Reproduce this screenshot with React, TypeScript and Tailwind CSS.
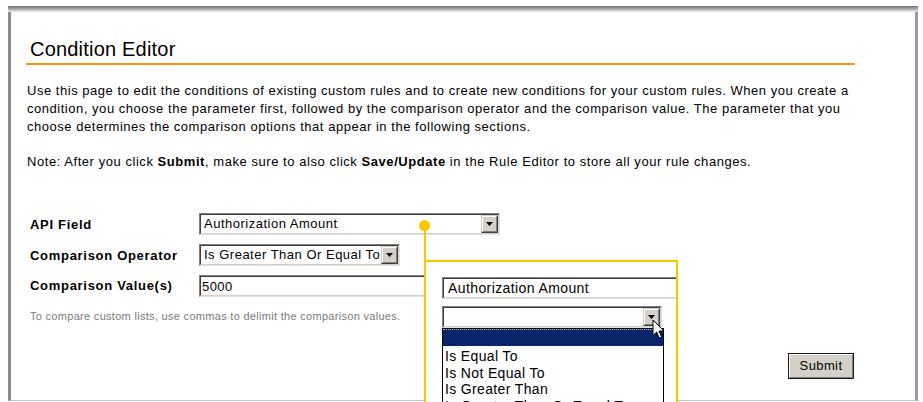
import React from "react";

function Inset({ className = "", children }: { className?: string; children?: React.ReactNode }) {
  return (
    <div className={`border border-t-[#808080] border-l-[#808080] border-b-[#e2e2e2] border-r-[#e2e2e2] ${className}`}>
      <div className="flex h-full items-center overflow-hidden border border-t-[#404040] border-l-[#404040] border-b-[#d4d0c8] border-r-[#d4d0c8] bg-white">
        {children}
      </div>
    </div>
  );
}

function DropButton() {
  return (
    <div className="h-full w-[17px] shrink-0 border border-t-[#d4d0c8] border-l-[#d4d0c8] border-b-[#404040] border-r-[#404040] bg-[#d4d0c8]">
      <div className="flex h-full w-full items-center justify-center border border-t-white border-l-white border-b-[#808080] border-r-[#808080]">
        <svg width="7" height="4" viewBox="0 0 7 4">
          <path d="M0 0h7L3.5 4z" fill="#000" />
        </svg>
      </div>
    </div>
  );
}

function Select({ value, className = "" }: { value: string; className?: string }) {
  return (
    <Inset className={className}>
      <span className="flex-1 overflow-hidden whitespace-nowrap pl-[3px] text-[13px] tracking-[0.5px] text-black">{value}</span>
      <DropButton />
    </Inset>
  );
}

function Pointer() {
  return (
    <svg width="14" height="21" viewBox="0 0 14 21" className="absolute left-[652px] top-[319px]">
      <path
        d="M1 1 L1 16.5 L4.6 13 L7.2 19 L9.6 18 L7 12 L12 12 Z"
        fill="#fff"
        stroke="#000"
        strokeWidth="1"
        strokeLinejoin="miter"
      />
    </svg>
  );
}

export default function App() {
  return (
    <div className="relative h-[402px] w-[923px] overflow-hidden bg-white font-['Liberation_Sans',Arial,sans-serif] text-black">
      <div className="pl-[8px] pt-[6px]">
        <div className="w-[910px]">
          <div className="h-[6px] bg-gradient-to-b from-[#747474] via-[#a8a8a8] to-[#f2f2f2]" />
          <div className="h-[389px] border-b border-l-[3px] border-r-[3px] border-b-[#c8c8c8] border-l-[#8a8a8a] border-r-[#9a9a9a]">
            <div className="pl-[15px]">
              <h1 className="pl-[4px] pt-[25px] text-[20px] leading-[24px] tracking-[0.2px]">Condition Editor</h1>
              <div className="mt-[2px] h-[2px] w-[829px] bg-[#f7941d]" />

              <p className="mt-[17px] pl-[1px] text-[13px] leading-[18px] tracking-[0.53px]">
                Use this page to edit the conditions of existing custom rules and to create new conditions for your custom rules. When you create a
                <br />
                condition, you choose the parameter first, followed by the comparison operator and the comparison value. The parameter that you
                <br />
                choose determines the comparison options that appear in the following sections.
              </p>
              <p className="mt-[17px] pl-[1px] text-[13px] leading-[18px] tracking-[0.55px]">
                Note: After you click <b>Submit</b>, make sure to also click <b>Save/Update</b> in the Rule Editor to store all your rule changes.
              </p>

              <div className="mt-[42px] grid grid-cols-[173px_auto] gap-y-[9px]">
                <div className="flex h-[22px] items-center pl-[4px] pt-[2px] text-[13px] font-bold tracking-[0.7px]">API Field</div>
                <Select value="Authorization Amount" className="h-[22px] w-[301px]" />

                <div className="flex h-[22px] items-center pl-[4px] pt-[2px] text-[13px] font-bold tracking-[0.7px]">Comparison Operator</div>
                <Select value="Is Greater Than Or Equal To" className="h-[22px] w-[201px]" />

                <div className="flex h-[22px] items-center pl-[4px] text-[13px] font-bold tracking-[0.7px]">Comparison Value(s)</div>
                <Inset className="h-[22px] w-[301px]">
                  <span className="pl-[1px] pt-[2px] text-[13px] tracking-[0.4px]">5000</span>
                </Inset>
              </div>

              <p className="mt-[12px] pl-[4px] text-[11px] leading-[14px] tracking-[0.3px] text-[#7a7a7a]">
                To compare custom lists, use commas to delimit the comparison values.
              </p>

              <div className="mt-[30px] flex w-[828px] justify-end">
                <button className="h-[26px] w-[66px] border border-[#1a1a1a] bg-[#d4d0c8] p-0">
                  <span className="flex h-full w-full items-center justify-center border border-t-white border-l-white border-b-[#808080] border-r-[#808080] text-[13px] tracking-[0.4px] text-black">
                    Submit
                  </span>
                </button>
              </div>
            </div>
          </div>
        </div>
      </div>

      {/* callout: dot, leader line and zoomed detail box */}
      <div className="absolute left-[419px] top-[220px] h-[11px] w-[11px] rounded-full bg-[#fbc700]" />
      <div className="absolute left-[424px] top-[225px] h-[36px] w-[2px] bg-[#fbc700]" />
      <div className="absolute left-[424px] top-[260px] h-[160px] w-[254px] overflow-hidden border-2 border-b-0 border-[#fbc700] bg-white">
        <div className="pl-[16px] pt-[15px]">
          <Inset className="h-[22px] w-[260px]">
            <span className="whitespace-nowrap pl-[4px] text-[14px] tracking-[0.4px]">Authorization Amount</span>
          </Inset>
          <Select value="" className="mt-[7px] h-[22px] w-[220px]" />
          <div className="w-[222px] border-x border-t border-[#000] bg-white text-[14px] tracking-[0.35px]">
            <div className="h-[17px] border-t border-dotted border-t-[#c0c0c0] bg-[#0a246a]" />
            <div className="pt-[2px]">
              <div className="h-[16.5px] pl-[2px] leading-[16.5px]">Is Equal To</div>
              <div className="h-[16.5px] pl-[2px] leading-[16.5px]">Is Not Equal To</div>
              <div className="h-[16.5px] pl-[2px] leading-[16.5px]">Is Greater Than</div>
              <div className="h-[16.5px] whitespace-nowrap pl-[2px] leading-[16.5px]">Is Greater Than Or Equal To</div>
            </div>
          </div>
        </div>
      </div>
      <Pointer />
    </div>
  );
}
